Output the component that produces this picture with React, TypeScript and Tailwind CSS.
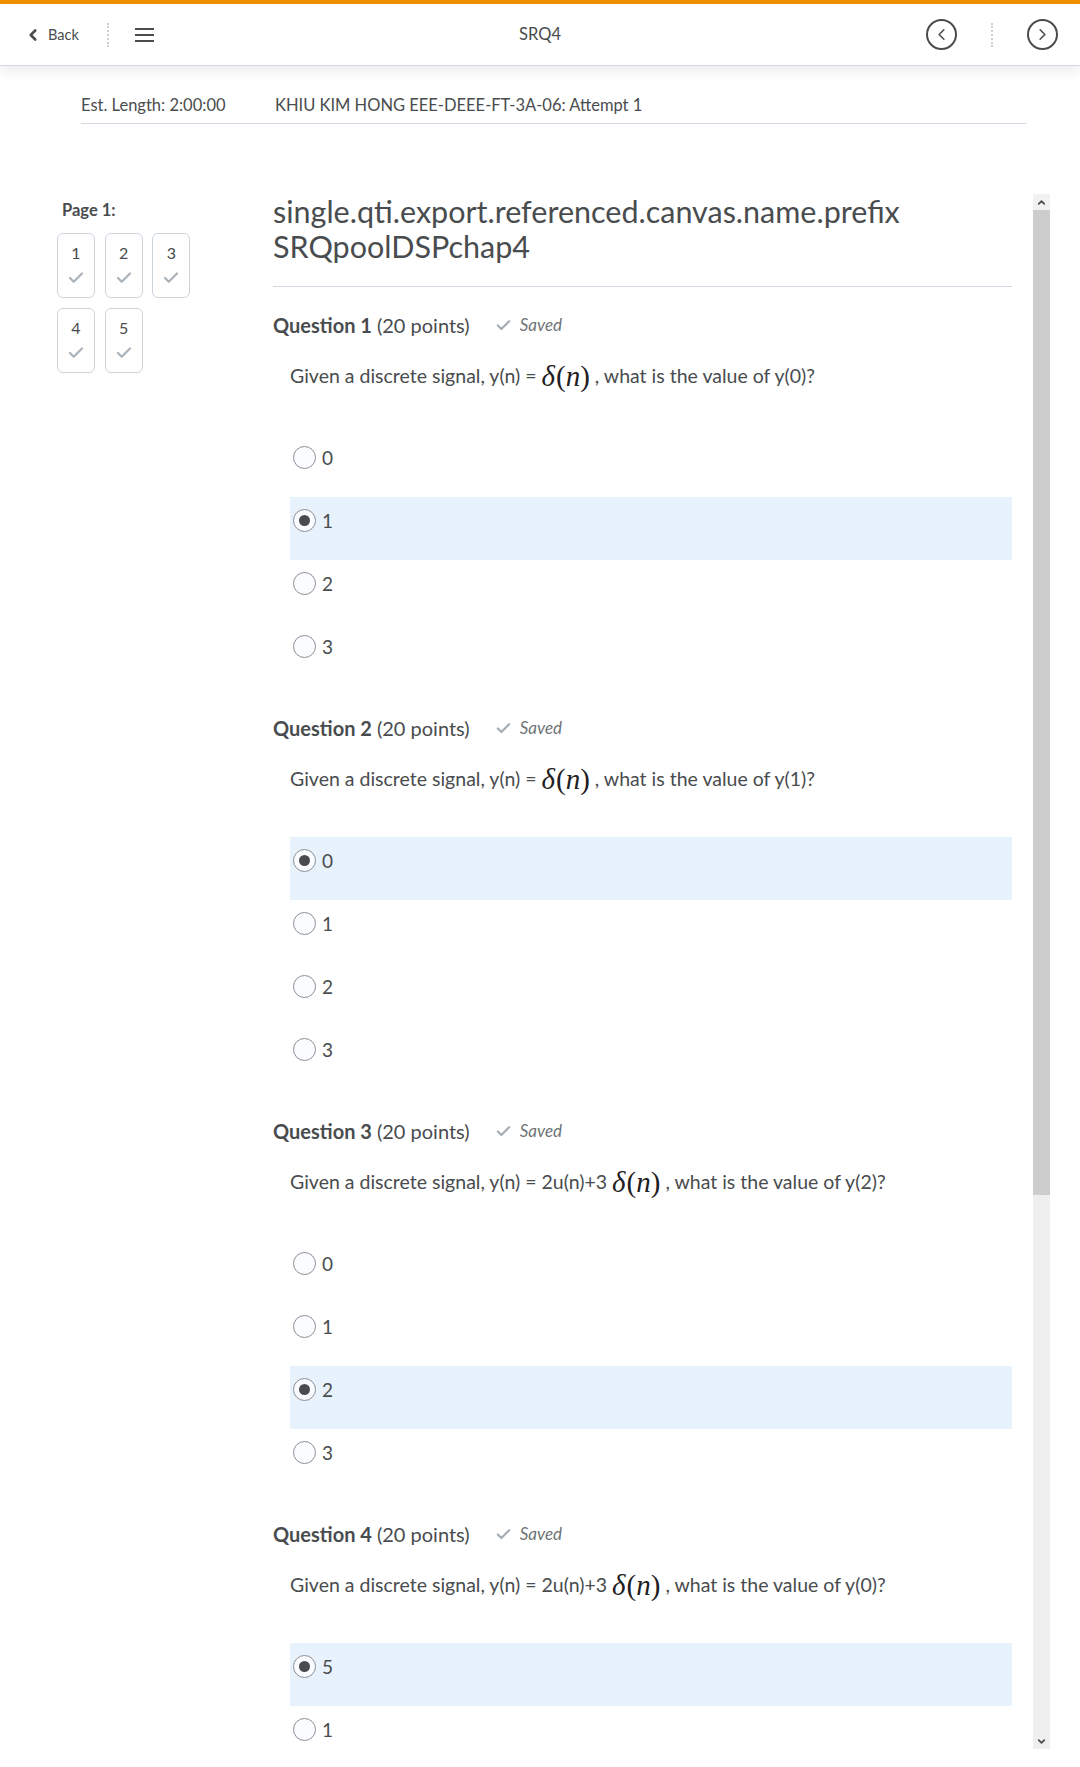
import { ChevronLeft, ChevronRight, Check } from "lucide-react";

type Question = {
  num: number;
  before: string;
  after: string;
  options: string[];
  selected: number;
};

const questions: Question[] = [
  { num: 1, before: "Given a discrete signal, y(n) = ", after: " , what is the value of y(0)?", options: ["0", "1", "2", "3"], selected: 1 },
  { num: 2, before: "Given a discrete signal, y(n) = ", after: " , what is the value of y(1)?", options: ["0", "1", "2", "3"], selected: 0 },
  { num: 3, before: "Given a discrete signal, y(n) = 2u(n)+3 ", after: " , what is the value of y(2)?", options: ["0", "1", "2", "3"], selected: 2 },
  { num: 4, before: "Given a discrete signal, y(n) = 2u(n)+3 ", after: " , what is the value of y(0)?", options: ["5", "1", "2", "3"], selected: 0 },
];

function Delta() {
  return (
    <span className="font-['Liberation_Serif',serif] text-[29px] leading-none text-[#1f2022]">
      <i>δ</i>
      <span className="ml-[1px]">(</span>
      <i>n</i>
      <span>)</span>
    </span>
  );
}

function Radio({ checked }: { checked: boolean }) {
  return (
    <span className="flex h-[23px] w-[23px] shrink-0 items-center justify-center rounded-full border border-[#8a8f94] bg-[#fbfcff]">
      {checked && <span className="h-[11px] w-[11px] rounded-full bg-[#494c4e]" />}
    </span>
  );
}

function QuestionBlock({ q, first }: { q: Question; first: boolean }) {
  return (
    <div className={first ? "mt-[26px]" : "mt-[30px]"}>
      <div className="flex h-[24px] items-center text-[20px]">
        <span className="font-bold">Question {q.num}</span>
        <span className="ml-[5px]">(20 points)</span>
        <Check className="ml-[25px] h-[17px] w-[17px] text-[#a3abb3]" strokeWidth={3} />
        <span className="ml-[8px] text-[17px] italic text-[#6e7376]">Saved</span>
      </div>
      <div className="ml-[17px] mt-[22px] flex h-[34px] items-center whitespace-pre text-[19.5px]">
        <span>{q.before}</span>
        <Delta />
        <span>{q.after}</span>
      </div>
      <div className="ml-[17px] mt-[41px]">
        {q.options.map((o, i) => (
          <div
            key={i}
            className={`flex h-[63px] items-start pl-[3px] pt-[12px] ${i === q.selected ? "bg-[#e8f2fc]" : ""}`}
          >
            <Radio checked={i === q.selected} />
            <span className="ml-[6px] text-[19px] leading-[23px]">{o}</span>
          </div>
        ))}
      </div>
    </div>
  );
}

function DotDivider() {
  return <span className="h-[24px] border-l-2 border-dotted border-[#c9d0d6]" />;
}

export default function App() {
  return (
    <div className="h-[1767px] overflow-hidden bg-white font-['Lato',sans-serif] text-[#494c4e]">
      <div className="h-[4px] bg-[#f29200]" />
      <header className="relative z-10 grid h-[62px] grid-cols-[1fr_auto_1fr] items-center border-b border-[#d3d9e3] bg-white shadow-[0_4px_14px_rgba(0,0,0,0.09)]">
        <div className="flex items-center">
          <button className="ml-[24px] flex items-center text-[14.5px] text-[#494c4e]">
            <ChevronLeft className="h-[18px] w-[18px]" strokeWidth={3.5} />
            <span className="ml-[6px]">Back</span>
          </button>
          <span className="ml-[28px] flex">
            <DotDivider />
          </span>
          <span className="ml-[26px] flex w-[19px] flex-col gap-[4px]">
            <span className="h-[2px] bg-[#494c4e]" />
            <span className="h-[2px] bg-[#494c4e]" />
            <span className="h-[2px] bg-[#494c4e]" />
          </span>
        </div>
        <div className="text-[16.5px]">SRQ4</div>
        <div className="flex items-center justify-end pr-[22px]">
          <span className="flex h-[31px] w-[31px] items-center justify-center rounded-full border-2 border-[#494c4e]">
            <ChevronLeft className="h-[19px] w-[19px]" strokeWidth={2} />
          </span>
          <span className="mx-[34px] flex">
            <DotDivider />
          </span>
          <span className="flex h-[31px] w-[31px] items-center justify-center rounded-full border-2 border-[#494c4e]">
            <ChevronRight className="h-[19px] w-[19px]" strokeWidth={2} />
          </span>
        </div>
      </header>

      <div className="ml-[81px] mt-[29px] flex w-[945px] border-b border-[#d3d9e3] pb-[8px] text-[16.5px] leading-[20px]">
        <span className="w-[194px]">Est. Length: 2:00:00</span>
        <span>KHIU KIM HONG EEE-DEEE-FT-3A-06: Attempt 1</span>
      </div>

      <div className="mt-[70px] flex items-start">
        <aside className="ml-[57px] w-[216px] shrink-0">
          <div className="pl-[5px] pt-[6px] text-[16.5px] font-bold leading-[20px]">Page 1:</div>
          <div className="mt-[13px] grid w-[133px] grid-cols-3 gap-x-[10px] gap-y-[10px]">
            {[1, 2, 3, 4, 5].map((n) => (
              <div
                key={n}
                className="flex h-[65px] w-[38px] flex-col items-center rounded-[6px] border border-[#cdd5dc] pt-[9px]"
              >
                <span className="text-[16px] leading-[20px]">{n}</span>
                <Check className="mt-[6px] h-[18px] w-[18px] text-[#aab3bb]" strokeWidth={3} />
              </div>
            ))}
          </div>
        </aside>

        <main className="w-[739px] shrink-0">
          <h1 className="border-b border-[#d3d9e3] pb-[22px] text-[30.5px] leading-[35px]">
            single.qti.export.referenced.canvas.name.prefix
            <br />
            SRQpoolDSPchap4
          </h1>
          {questions.map((q, i) => (
            <QuestionBlock key={q.num} q={q} first={i === 0} />
          ))}
        </main>

        <div className="ml-[21px] flex h-[1555px] w-[17px] shrink-0 flex-col bg-[#efefef]">
          <div className="flex h-[16px] items-center justify-center bg-[#f1f1f1]">
            <ChevronLeft className="h-[11px] w-[11px] rotate-90 text-[#505050]" strokeWidth={4} />
          </div>
          <div className="h-[985px] bg-[#cdcdcd]" />
          <div className="flex-1" />
          <div className="flex h-[16px] items-center justify-center">
            <ChevronLeft className="h-[11px] w-[11px] -rotate-90 text-[#505050]" strokeWidth={4} />
          </div>
        </div>
      </div>
    </div>
  );
}
